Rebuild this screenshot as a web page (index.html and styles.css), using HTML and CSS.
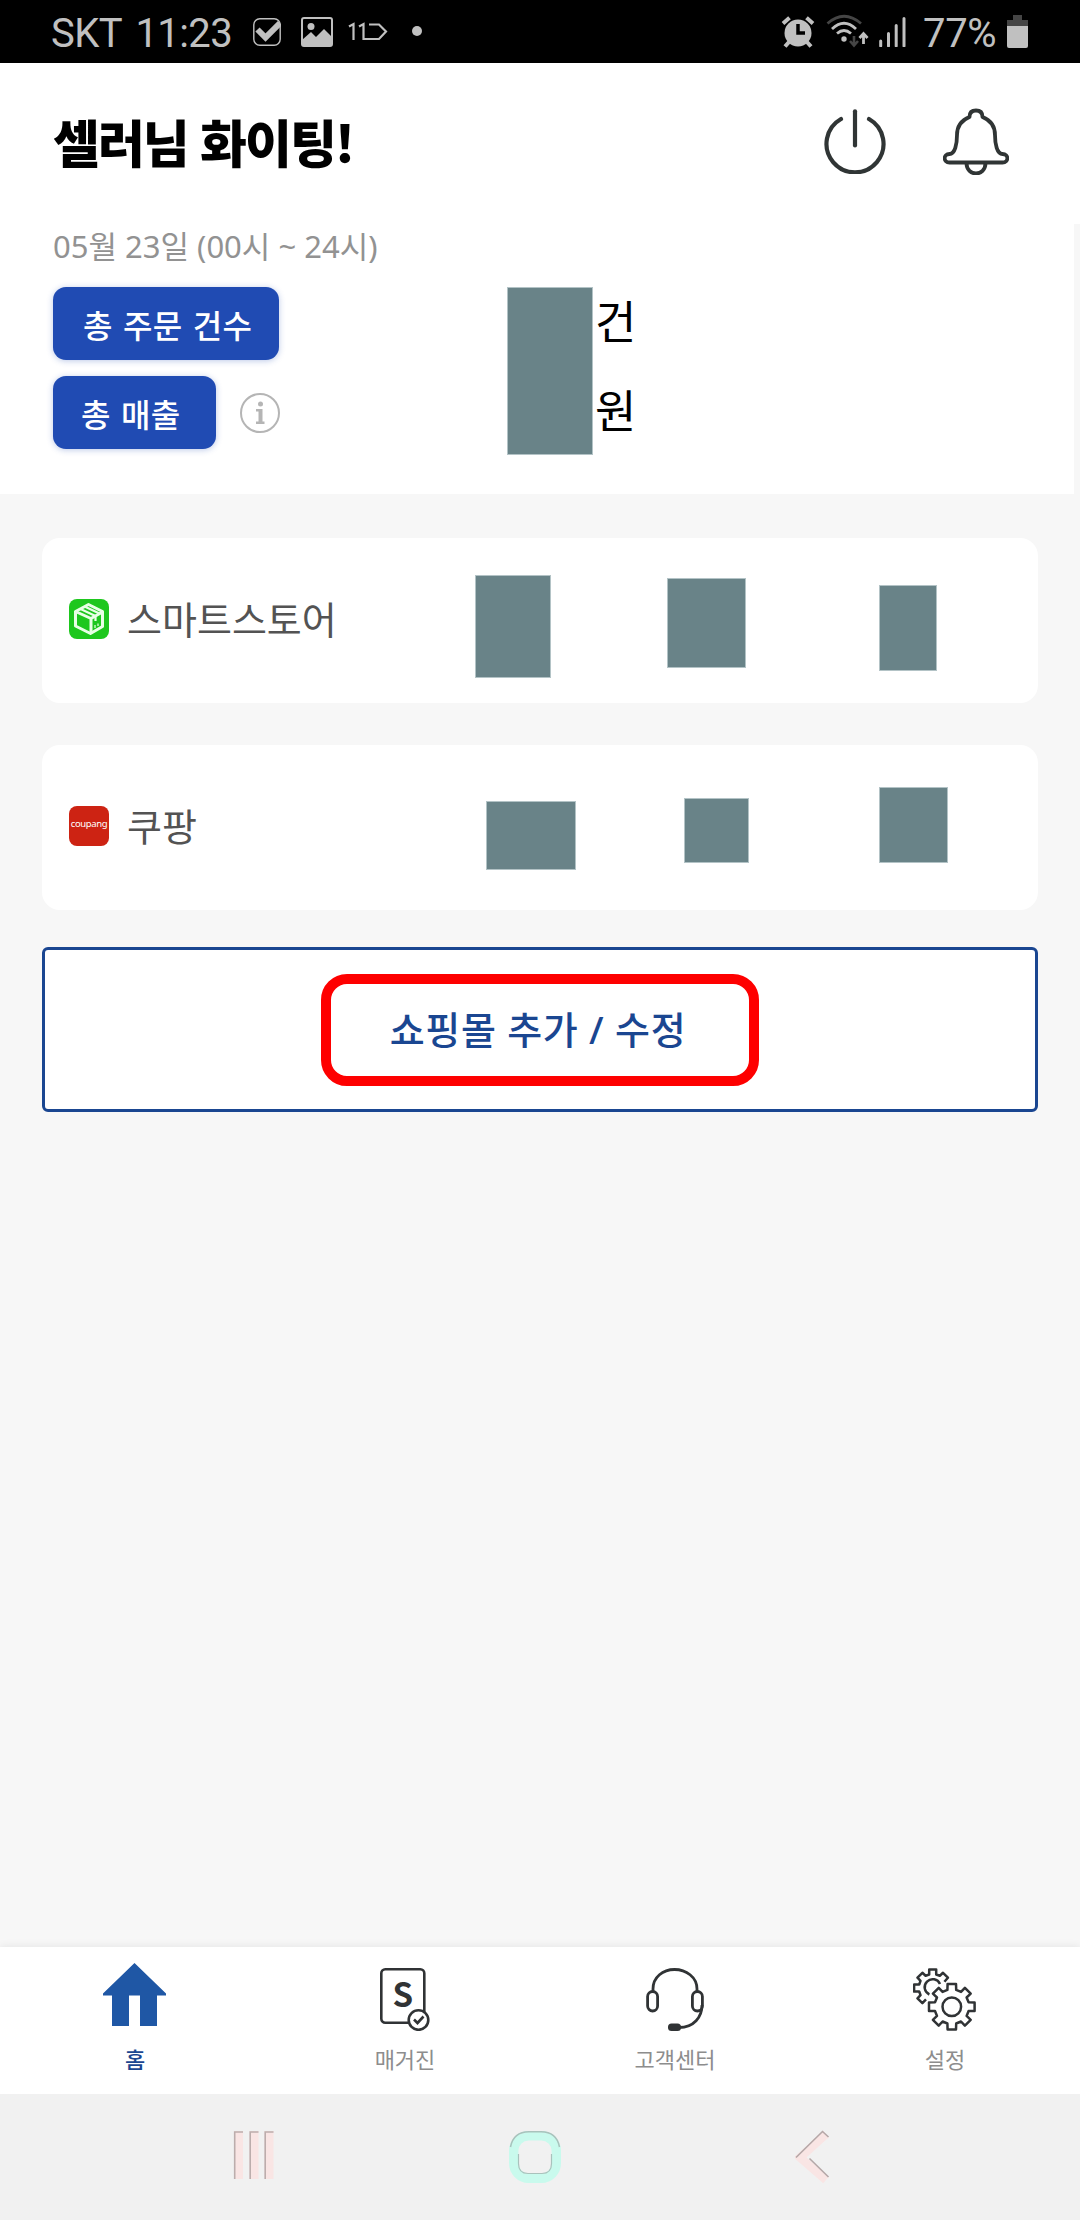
FILE: index.html
```html
<!DOCTYPE html>
<html lang="ko">
<head>
<meta charset="utf-8">
<title>셀러 홈</title>
<link rel="stylesheet" href="styles.css">
</head>
<body>
<div class="screen">
  <div class="status">
    <span class="status-text clock">SKT 11:23</span>
    <svg class="ic-check" width="28" height="28" viewBox="0 0 28 28"><rect x="0.8" y="0.8" width="26.4" height="26.4" rx="6" fill="none" stroke="#c0c0c0" stroke-width="1.4"/><path d="M4.500 11.500L12.500 19.500L27 5" fill="none" stroke="#c0c0c0" stroke-width="6"/></svg>
    <svg class="ic-image" width="32" height="30" viewBox="0 0 32 30"><rect x="1" y="1" width="30" height="28" rx="2" fill="none" stroke="#c0c0c0" stroke-width="2"/><circle cx="10" cy="9.500" r="3.500" fill="#c0c0c0"/><path d="M1 23L10 15L15 20L23 12L31 20V29H1Z" fill="#c0c0c0"/></svg>
    <svg class="ic-eleven" width="40" height="20" viewBox="0 0 40 20"><path d="M1 4.500L5.500 2V18M11 4.500L15.500 2V17H31L38 9.500L31 2.500H21" fill="none" stroke="#c0c0c0" stroke-width="2.200"/></svg>
    <span class="dot"></span>
    <span class="spacer"></span>
    <svg class="ic-alarm" width="34" height="32" viewBox="0 0 34 32"><circle cx="17" cy="17" r="13.500" fill="#c0c0c0"/><path d="M2 7.500L8.500 1.800M25.500 1.800L32 7.500" stroke="#c0c0c0" stroke-width="4" fill="none"/><path d="M8 26L4 30.500M26 26L30 30.500" stroke="#c0c0c0" stroke-width="4"/><path d="M17 8V17H24" fill="none" stroke="#000" stroke-width="3.500"/></svg>
    <svg class="ic-wifi" width="43" height="34" viewBox="0 0 43 34"><g fill="none" stroke-width="2.800"><path d="M1.500 9.500Q18-5 35 9.500" stroke="#454545"/><path d="M6 15Q18 3.500 30 15" stroke="#c0c0c0"/><path d="M11 19.500Q18 13.500 25 19.500" stroke="#c0c0c0"/></g><circle cx="18" cy="25" r="2.700" fill="#c0c0c0"/><path d="M28 22V31M24 27L28 31.500L32 27" fill="none" stroke="#454545" stroke-width="2.600"/><path d="M37.500 30V20M33.500 24L37.500 19.500L41.500 24" fill="none" stroke="#c0c0c0" stroke-width="2.800"/></svg>
    <svg class="ic-signal" width="27" height="30" viewBox="0 0 27 30"><path d="M1.700 24V29M9.500 16.500V29M17.200 8.500V29M25 1.500V29" stroke="#c0c0c0" stroke-width="3" stroke-linecap="round"/></svg>
    <span class="status-text percent">77%</span>
    <svg class="ic-battery" width="21" height="33" viewBox="0 0 21 33"><path d="M6 0H15V5H21V11H0V5H6Z" fill="#454545"/><path d="M0 11H21V31Q21 33 19 33H2Q0 33 0 31Z" fill="#c0c0c0"/></svg>
  </div>

  <header class="header">
    <h1 class="title">셀러님 화이팅!</h1>
    <svg class="ic-power" width="62" height="66" viewBox="0 0 62 66"><g fill="none" stroke="#303535" stroke-width="4.200" stroke-linecap="round"><path d="M31 3.300V37.500"/><path d="M17 11A28.500 28.500 0 1 0 45 11"/></g></svg>
    <svg class="ic-bell" width="66" height="67" viewBox="0 0 66 67"><g fill="none" stroke="#303535" stroke-width="3.800" stroke-linejoin="round"><path d="M26.500 9C26.500 4 29 2.500 33 2.500S39.500 4 39.500 9C47 12 52 17.500 52 27C52 36 54 46 59.500 46C66 46 66 54.500 59.500 54.500H6.500C0 54.500 0 46 6.500 46C12 46 14 36 14 27C14 17.500 19 12 26.500 9Z"/><path d="M23.500 55C23.500 69 42.500 69 42.500 55"/></g></svg>
  </header>

  <section class="summary">
    <p class="date">05월 23일 (00시 ~ 24시)</p>
    <div class="totals">
      <div class="labels">
        <button class="pill orders">총 주문 건수</button>
        <div class="sales-row">
          <button class="pill sales">총 매출</button>
          <svg width="40" height="40" viewBox="0 0 40 40"><circle cx="20" cy="20" r="19" fill="none" stroke="#b5b5b5" stroke-width="2"/><circle cx="20.500" cy="11" r="2.500" fill="#b5b5b5"/><path d="M16 16H22.500V28.500H24.500V31H16V28.500H18.500V18.500H16Z" fill="#b5b5b5"/></svg>
        </div>
      </div>
      <div class="mask total-mask"></div>
      <div class="units"><span>건</span><span>원</span></div>
    </div>
  </section>

  <main class="content">
    <article class="card">
      <svg class="logo" width="40" height="40" viewBox="0 0 40 40"><rect width="40" height="40" rx="8" fill="#1ec71e"/><g fill="none" stroke="#e9ffe6" stroke-width="3" stroke-linejoin="round"><path d="M6.500 12.500L19.500 5.500L33.500 12.500V27.500L21.500 34.500L6.500 27Z"/><path d="M6.500 12.500L22 19.500V34M22 19.500L33.500 13"/><path d="M11.500 10L26.500 17V22M15.500 7.500L30.500 14.500" stroke-width="2.200"/><path d="M26 26V29M29 24.500V27" stroke-width="1.200"/></g></svg>
      <span class="shop">스마트스토어</span>
      <div class="mask smart-a"></div><div class="mask smart-b"></div><div class="mask smart-c"></div>
    </article>
    <article class="card">
      <span class="logo coupang">coupang</span>
      <span class="shop">쿠팡</span>
      <div class="mask cou-a"></div><div class="mask cou-b"></div><div class="mask cou-c"></div>
    </article>
    <button class="edit"><span class="highlight">쇼핑몰 추가 / 수정</span></button>
  </main>

  <nav class="tabs">
    <a class="tab active"><svg width="64" height="68" viewBox="0 0 64 68"><path d="M31.500 0L63 30.500V32.500H54V63H37V32.500H26V63H9V32.500H0V30.500Z" fill="#1f57a5"/></svg><span>홈</span></a>
    <a class="tab"><svg width="52" height="68" viewBox="0 0 52 68"><g fill="none" stroke="#303335" stroke-width="2.600"><rect x="2.300" y="6.300" width="43" height="53.500" rx="4"/><circle cx="39.500" cy="57" r="9.800" fill="#fff"/><path d="M35 56.500L38.500 60L44.500 53.500"/></g><text class="mag-s" x="23.800" y="43.500" text-anchor="middle">S</text></svg><span>매거진</span></a>
    <a class="tab"><svg width="58" height="68" viewBox="0 0 58 68"><g fill="none" stroke="#303335" stroke-width="2.800"><path d="M7 28V26C7 14 17 6.500 28.500 6.500S51 14 51 26V28"/><rect x="1.600" y="28.500" width="10" height="19.500" rx="5"/><rect x="46.400" y="28.500" width="10" height="19.500" rx="5"/><path d="M56 42C56 54 48 64.500 33 64.500"/></g><rect x="22" y="60.500" width="13" height="7.500" rx="3.500" fill="#303335"/></svg><span>고객센터</span></a>
    <a class="tab"><svg width="64" height="68" viewBox="0 0 64 68"><g fill="none" stroke="#303335" stroke-width="2.500" stroke-linejoin="round"><g transform="translate(19.700 25)"><path d="M11.700-6.300L15.200-10.300L10.300-15.200L7.100-12.300L3.500-13.500V-18.600H-3.500V-13.500L-7.100-12.300L-10.300-15.200L-15.200-10.300L-12.200-7.100L-13.500-3.500H-18.600V3.500H-13.500L-12.200 7.100L-15.200 10.300L-10.300 15.200L-6.700 11.300"/><path d="M7.300-4A8 8 0 1 0-3.300 6.500"/></g><g transform="translate(38.800 43.700)"><path d="M-4.200-22.800H4.200L4.400-16.800L9.200-14.800L13.100-18.900L18.900-13.100L14.800-9.200L16.800-4.400L22.800-4.200V4.200L16.800 4.400L14.800 9.200L18.900 13.100L13.100 18.900L9.200 14.800L4.400 16.800L4.200 22.800H-4.200L-4.400 16.800L-9.200 14.800L-13.100 18.900L-18.900 13.100L-14.800 9.200L-16.800 4.400L-22.800 4.200V-4.200L-16.800-4.400L-14.800-9.200L-18.900-13.100L-13.100-18.900L-9.200-14.800L-4.400-16.800Z"/><circle r="9.300"/></g></g></svg><span>설정</span></a>
  </nav>

  <div class="system">
    <svg width="42" height="50" viewBox="0 0 42 50"><path d="M1 1H10V49H1ZM16.500 1H25.500V49H16.500ZM31.500 1H40.500V49H31.500Z" fill="#f9e5e4"/><path d="M1.700 49V2H10M17.200 49V2H25.500M32.200 49V2H40.500" fill="none" stroke="#bcadac" stroke-width="1.600"/></svg>
    <svg width="54" height="54" viewBox="0 0 54 54"><rect x="5.700" y="5.700" width="42.600" height="42.600" rx="15" fill="none" stroke="#c9faed" stroke-width="9.400"/><path d="M2.500 17C4.500 6.500 11 1.700 21 1.700H33C43 1.700 49.500 6.500 51.500 17" fill="none" stroke="#a9c2bc" stroke-width="1.500"/><path d="M10.500 24V33.500C10.500 40 14 43.500 20 43.500H34C40 43.500 43.500 40 43.500 33.500V24" fill="none" stroke="#a9c2bc" stroke-width="1.200"/></svg>
    <svg width="36" height="54" viewBox="0 0 36 54"><path d="M31 4L5 27.500L31 50" fill="none" stroke="#f9e5e4" stroke-width="8.500"/><path d="M1 27.500L27.500 1.500L33.500 7M14.500 28.500L33.500 47" fill="none" stroke="#b5a8a8" stroke-width="1.600"/></svg>
  </div>
</div>
</body>
</html>
```
FILE: styles.css
```css
* { box-sizing: border-box; }
body { margin: 0; font-family: "Noto Sans", "Noto Sans CJK KR", sans-serif; }
h1, p { margin: 0; }
button { font: inherit; border: 0; padding: 0; }
svg { display: block; flex: none; }

.screen { width: 1080px; height: 2220px; display: flex; flex-direction: column; background: #f7f7f7; overflow: hidden; }

.status { height: 63px; flex: none; background: #000; display: flex; align-items: flex-start; padding: 0 52px 0 51px; }
.status-text { font-family: Roboto, sans-serif; font-size: 40px; line-height: 47px; color: #c0c0c0; white-space: nowrap; margin-top: 10px; }
.clock { width: 202px; letter-spacing: -.6px; word-spacing: 5px; }
.ic-check { margin-top: 18px; }
.ic-image { margin: 17px 0 0 20px; }
.ic-eleven { margin: 22px 0 0 15px; }
.dot { width: 10px; height: 10px; border-radius: 50%; background: #c0c0c0; margin: 26px 0 0 24px; }
.spacer { flex: 1; }
.ic-alarm { margin: 16px 11px 0 0; }
.ic-wifi { margin: 14px 10px 0 0; }
.ic-signal { margin: 17px 17px 0 0; }
.percent { width: 84px; letter-spacing: -.3px; }
.ic-battery { margin-top: 15px; }

.header { height: 161px; flex: none; background: #fff; display: flex; padding: 0 71px 0 53px; }
.title { flex: 1; margin-top: 40px; font-family: "Noto Sans CJK KR", sans-serif; font-size: 51px; line-height: 76px; font-weight: 900; letter-spacing: -2px; color: #000; white-space: nowrap; }
.ic-power { margin: 45px 57px 0 0; }
.ic-bell { margin-top: 45px; }

.summary { height: 270px; flex: none; width: 1074px; background: #fff; padding-left: 53px; }
.date { height: 63px; font-size: 31px; line-height: 44px; color: #929292; white-space: nowrap; }
.totals { display: flex; }
.labels { width: 454px; display: flex; flex-direction: column; gap: 16px; }
.pill { height: 73px; border-radius: 13px; background: #204bb3; color: #fff; font-size: 32px; font-weight: 500; font-family: "Noto Sans CJK KR", sans-serif; line-height: 74px; letter-spacing: .2px; word-spacing: 1.3px; box-shadow: 0 1px 6px rgba(32, 75, 179, .3); text-align: left; white-space: nowrap; }
.orders { width: 226px; padding-left: 30px; }
.sales { width: 163px; padding-left: 28px; }
.sales-row { display: flex; gap: 24px; align-items: center; }
.mask { flex: none; background: #698388; border: 1px solid #b3c3c6; }
.total-mask { width: 86px; height: 168px; }
.units { display: flex; flex-direction: column; padding-left: 2px; font-family: "Noto Sans CJK KR", sans-serif; font-size: 45px; line-height: 89px; color: #000; margin-top: -12px; }

.content { flex: 1; padding: 44px 42px 0; display: flex; flex-direction: column; }
.card { height: 165px; margin-bottom: 42px; flex: none; border-radius: 18px; background: #fff; display: flex; padding-left: 27px; }
.logo { margin-top: 61px; }
.coupang { width: 40px; height: 40px; border-radius: 8px; background: #cd2313; color: #fff; font: 9.5px/36px "Noto Sans", sans-serif; letter-spacing: -.4px; text-align: center; flex: none; }
.shop { width: 347px; padding-left: 18px; margin-top: 53px; font-size: 38px; line-height: 56px; color: #535353; white-space: nowrap; }
.smart-a { width: 76px; height: 103px; margin: 37px 0 0 19px; }
.smart-b { width: 79px; height: 90px; margin: 40px 0 0 116px; }
.smart-c { width: 58px; height: 86px; margin: 47px 0 0 133px; }
.cou-a { width: 90px; height: 69px; margin: 56px 0 0 30px; }
.cou-b { width: 65px; height: 65px; margin: 53px 0 0 108px; }
.cou-c { width: 69px; height: 76px; margin: 42px 0 0 130px; }
.edit { height: 165px; margin-top: -5px; flex: none; border: 3px solid #1a4691; border-radius: 6px; background: #fff; display: flex; justify-content: center; align-items: center; }
.highlight { width: 438px; height: 112px; border: 10px solid #fe0000; border-radius: 26px; padding-right: 4px; font-size: 38px; font-weight: 500; letter-spacing: .7px; line-height: 91px; color: #1a4691; white-space: nowrap; text-align: center; }

.tabs { height: 147px; flex: none; background: #fff; display: grid; grid-template-columns: repeat(4, 270px); box-shadow: 0 -1px 8px rgba(0, 0, 0, .07); }
.tab { display: flex; flex-direction: column; align-items: center; padding-top: 16px; font-size: 22px; line-height: 32px; color: #8d8d8d; white-space: nowrap; }
.tab span { margin-top: 12px; }
.active { color: #1a4691; font-weight: 500; }
.mag-s { font: 700 33px "Noto Sans CJK KR", sans-serif; fill: #303335; }

.system { height: 126px; flex: none; background: #f1f1f1; display: flex; align-items: flex-start; justify-content: space-between; padding: 36px 249px 0 233px; }
```
